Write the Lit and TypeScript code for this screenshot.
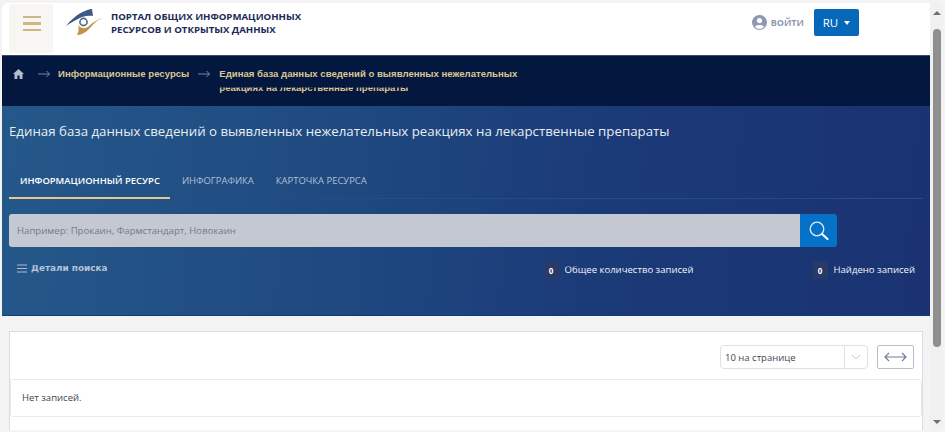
import { LitElement, html, css } from "lit";
import { customElement } from "lit/decorators.js";

@customElement("app-root")
export class AppRoot extends LitElement {
  static styles = css`
    :host { display: block; height: 432px; overflow: hidden; background: #f3f3f4; font-family: "Open Sans", "Noto Sans", sans-serif; box-sizing: border-box; padding: 3px 0 2px 2px; }
    * { box-sizing: border-box; }
    .win { display: flex; height: 427px; background: #fff; border-radius: 6px; overflow: hidden; width: 941px; }
    .main { width: 928px; flex: none; display: flex; flex-direction: column; background: #f3f3f4; }
    .sb { flex: 1; background: #f1f1f1; display: flex; flex-direction: column; align-items: center; padding-top: 8px; gap: 6px; }
    .sb .up { width: 0; height: 0; border: 4px solid transparent; border-top: 0; border-bottom: 4px solid #6e6e6e; }
    .sb .dn { width: 0; height: 0; border: 4px solid transparent; border-bottom: 0; border-top: 4px solid #6e6e6e; margin-top: 67px; }
    .sb .th { width: 8px; height: 318px; margin-top: 8px; border-radius: 4px; background: #8f8f8f; }
    header { height: 52px; background: #fff; display: flex; align-items: flex-start; flex: none; }
    .burger { width: 44px; height: 49px; margin: 1px 0 0 7px; background: #f7f6f2; display: flex; flex-direction: column; gap: 4px; padding: 12px 12px 0 14px; flex: none; }
    .burger i { display: block; height: 2.4px; background: #cdb681; }
    .logo { margin: 5px 0 0 12px; flex: none; }
    .title { margin: 4px 0 0 7px; font-weight: 700; font-size: 9.65px; line-height: 13px; color: #202b55; white-space: nowrap; padding-top: 3px; }
    .sp { flex: 1; }
    .login { display: flex; align-items: center; gap: 4px; margin-top: 12px; color: #8f97b2; font-size: 9px; font-weight: 700; }
    .ru { margin: 6px 71px 0 10px; width: 45px; height: 27px; background: #0568b8; border-radius: 2px; color: #fff; font-size: 11.5px; display: flex; align-items: center; justify-content: center; gap: 6px; }
    .ru i { width: 0; height: 0; border: 3.5px solid transparent; border-bottom: 0; border-top: 4px solid #fff; }
    .crumbs { height: 51px; flex: none; background: #03173f; border-top: 1px solid #3d4a6b; display: flex; align-items: flex-start; font-family: "Liberation Sans", sans-serif; font-weight: 700; font-size: 9.6px; color: #dcc692; padding: 11px 0 0 11px; white-space: nowrap; }
    .arrow { flex: none; margin-top: 3px; }
    .a1 { margin-left: 14px; margin-right: 8px; }
    .a2 { margin-left: 9px; margin-right: 9px; }
    .c { line-height: 14px; }
    .c2 { display: block; height: 14px; line-height: 14px; margin-top: 0; clip-path: inset(6.5px 0 0 0); }
    .hero { height: 210px; flex: none; background: linear-gradient(95deg, #25588a 0%, #1f4a80 35%, #1b3a78 65%, #1a3272 100%); padding: 18px 7px 0 7px; color: #fff; border-bottom: 1px solid #123a78; }
    h1 { margin: 0; font-weight: 400; font-size: 13.28px; line-height: 15px; color: #e8edf4; white-space: nowrap; }
    .tabs { display: flex; margin-top: 23px; height: 37px; border-bottom: 1px solid #1e5083; font-size: 9.45px; color: #b4bfd3; }
    .tab { padding: 12px 11px 0; height: 37px; white-space: nowrap; }
    .tab.on { color: #fff; font-weight: 600; border-bottom: 2px solid #e4c88c; padding-right: 10px; margin-right: 1px; }
    .search { display: flex; margin-top: 15px; width: 828px; height: 33px; }
    .search .inp { flex: 1; background: #c4c8d3; border-radius: 3px 0 0 3px; color: #767a87; font-size: 9.6px; padding: 0 8px; display: flex; align-items: center; }
    .search .btn { width: 37px; background: #0572c7; border-radius: 0 3px 3px 0; display: flex; align-items: center; justify-content: center; }
    .meta { height: 30px; margin-top: 14px; display: flex; }
    .det { display: flex; align-items: flex-start; gap: 4px; margin-left: 8px; font-family: "DejaVu Sans", sans-serif; font-weight: 700; font-size: 8.9px; color: #b7c3d6; }
    .det svg { margin-top: 3px; }
    .det span { line-height: 12px; margin-top: 1px; clip-path: inset(3px 0 0 0); }
    .stat { display: flex; align-items: flex-start; gap: 6px; font-size: 9.55px; color: #f2f4f8; white-space: nowrap; }
    .stat b { width: 15px; height: 18px; background: #2a3a68; border-radius: 2px; font-size: 8px; display: flex; align-items: center; justify-content: center; color: #fff; }
    .stat span { margin-top: 2px; line-height: 14px; clip-path: inset(3.5px 0 0 0); }
    .s1 { margin-left: 436px; }
    .s2 { margin-left: 119px; }
    .gap { height: 15px; flex: none; }
    .card { margin: 0 7px 0 7px; flex: 1; background: #fff; border: 1px solid #d9dbe8; border-bottom: 0; }
    .tools { height: 47px; display: flex; align-items: flex-start; padding: 13px 8px 0 0; justify-content: flex-end; gap: 9px; }
    .sel { width: 148px; height: 24px; border: 1px solid #dfe1e8; border-radius: 4px; display: flex; align-items: center; font-size: 9.5px; color: #3f4652; }
    .sel span { flex: 1; padding-left: 4px; }
    .sel em { width: 23px; height: 22px; border-left: 1px solid #dfe1e8; display: flex; align-items: center; justify-content: center; }
    .wide { width: 37px; height: 24px; border: 1px solid #b9bec9; border-radius: 2px; display: flex; align-items: center; justify-content: center; }
    .row { height: 38px; border: 1px solid #e8eaf0; border-radius: 3px; font-size: 9.5px; color: #3f4652; display: flex; align-items: center; padding-left: 11px; padding-bottom: 2px; }
  `;

  private arrow(cls: string) {
    return html`<svg class="arrow ${cls}" width="12" height="8" viewBox="0 0 12 8" fill="none"><path d="M0 4H11.5M8.5 1 L11.5 4 L8.5 7" stroke="#8a95ad" stroke-width="0.9"/></svg>`;
  }

  render() {
    return html`<div class="win">
      <div class="main">
        <header>
          <div class="burger"><i></i><i></i><i></i></div>
          <svg class="logo" width="39" height="28" viewBox="0 0 39 28">
            <path d="M1 18 C6 12 12 6 20 3 C23 1.5 26 1 27 1 L28 8 C22 7 16 9 13 11 C9 13 5 15 1 18Z" fill="#3c5a86"/>
            <path d="M38 10 C31 12 28 17 24 21 C20 25 16 27 12 27 C14 24 14 20 13 17 C16 21 21 21 24 18 C28 14 33 11 38 10Z" fill="#bf9443"/>
            <circle cx="18.5" cy="14" r="3.6" fill="#fff" stroke="#57678c" stroke-width="1.6"/>
          </svg>
          <div class="title">ПОРТАЛ ОБЩИХ ИНФОРМАЦИОННЫХ<br />РЕСУРСОВ И ОТКРЫТЫХ ДАННЫХ</div>
          <div class="sp"></div>
          <div class="login">
            <svg width="15" height="15" viewBox="0 0 14 14"><circle cx="7" cy="7" r="7" fill="#8f97b2"/><circle cx="7" cy="5.2" r="2.4" fill="#fff"/><path d="M2.8 11 C3.5 8.8 10.5 8.8 11.2 11 C10 12.4 8.5 13 7 13 C5.5 13 4 12.4 2.8 11Z" fill="#fff"/></svg>
            ВОЙТИ
          </div>
          <div class="ru">RU <i></i></div>
        </header>
        <div class="crumbs">
          <svg width="11" height="10" viewBox="0 0 11 10" style="margin-top:2px;flex:none"><path d="M5.5 0 L11 5 H9.5 V10 H6.6 V6.5 H4.4 V10 H1.5 V5 H0Z" fill="#b4bccd"/></svg>
          ${this.arrow("a1")}
          <span class="c">Информационные ресурсы</span>
          ${this.arrow("a2")}
          <span class="c">Единая база данных сведений о выявленных нежелательных<span class="c2">реакциях на лекарственные препараты</span></span>
        </div>
        <div class="hero">
          <h1>Единая база данных сведений о выявленных нежелательных реакциях на лекарственные препараты</h1>
          <div class="tabs">
            <div class="tab on">ИНФОРМАЦИОННЫЙ РЕСУРС</div>
            <div class="tab">ИНФОГРАФИКА</div>
            <div class="tab">КАРТОЧКА РЕСУРСА</div>
          </div>
          <div class="search">
            <div class="inp">Например: Прокаин, Фармстандарт, Новокаин</div>
            <div class="btn"><svg width="22" height="22" viewBox="0 0 22 22" fill="none"><circle cx="9" cy="9" r="6.8" stroke="#dcecf9" stroke-width="1.3"/><path d="M14 14 L19.5 19" stroke="#fff" stroke-width="2.2" stroke-linecap="round"/></svg></div>
          </div>
          <div class="meta">
            <div class="det"><svg width="10" height="9" viewBox="0 0 10 9"><path d="M0 1H10M0 4.5H10M0 8H10" stroke="#aebbd0" stroke-width="1.2"/></svg><span>Детали поиска</span></div>
            <div class="stat s1"><b>0</b><span>Общее количество записей</span></div>
            <div class="stat s2"><b>0</b><span>Найдено записей</span></div>
          </div>
        </div>
        <div class="gap"></div>
        <div class="card">
          <div class="tools">
            <div class="sel"><span>10 на странице</span><em><svg width="10" height="6" viewBox="0 0 10 6" fill="none"><path d="M1 1 L5 5 L9 1" stroke="#c4c8d0"/></svg></em></div>
            <div class="wide"><svg width="23" height="10" viewBox="0 0 23 10" fill="none"><path d="M1 5H22M5 1 L1 5 L5 9M18 1 L22 5 L18 9" stroke="#6f7f95" stroke-width="1.2"/></svg></div>
          </div>
          <div class="row">Нет записей.</div>
        </div>
      </div>
      <div class="sb"><div class="up"></div><div class="th"></div><div class="dn"></div></div>
    </div>`;
  }
}
